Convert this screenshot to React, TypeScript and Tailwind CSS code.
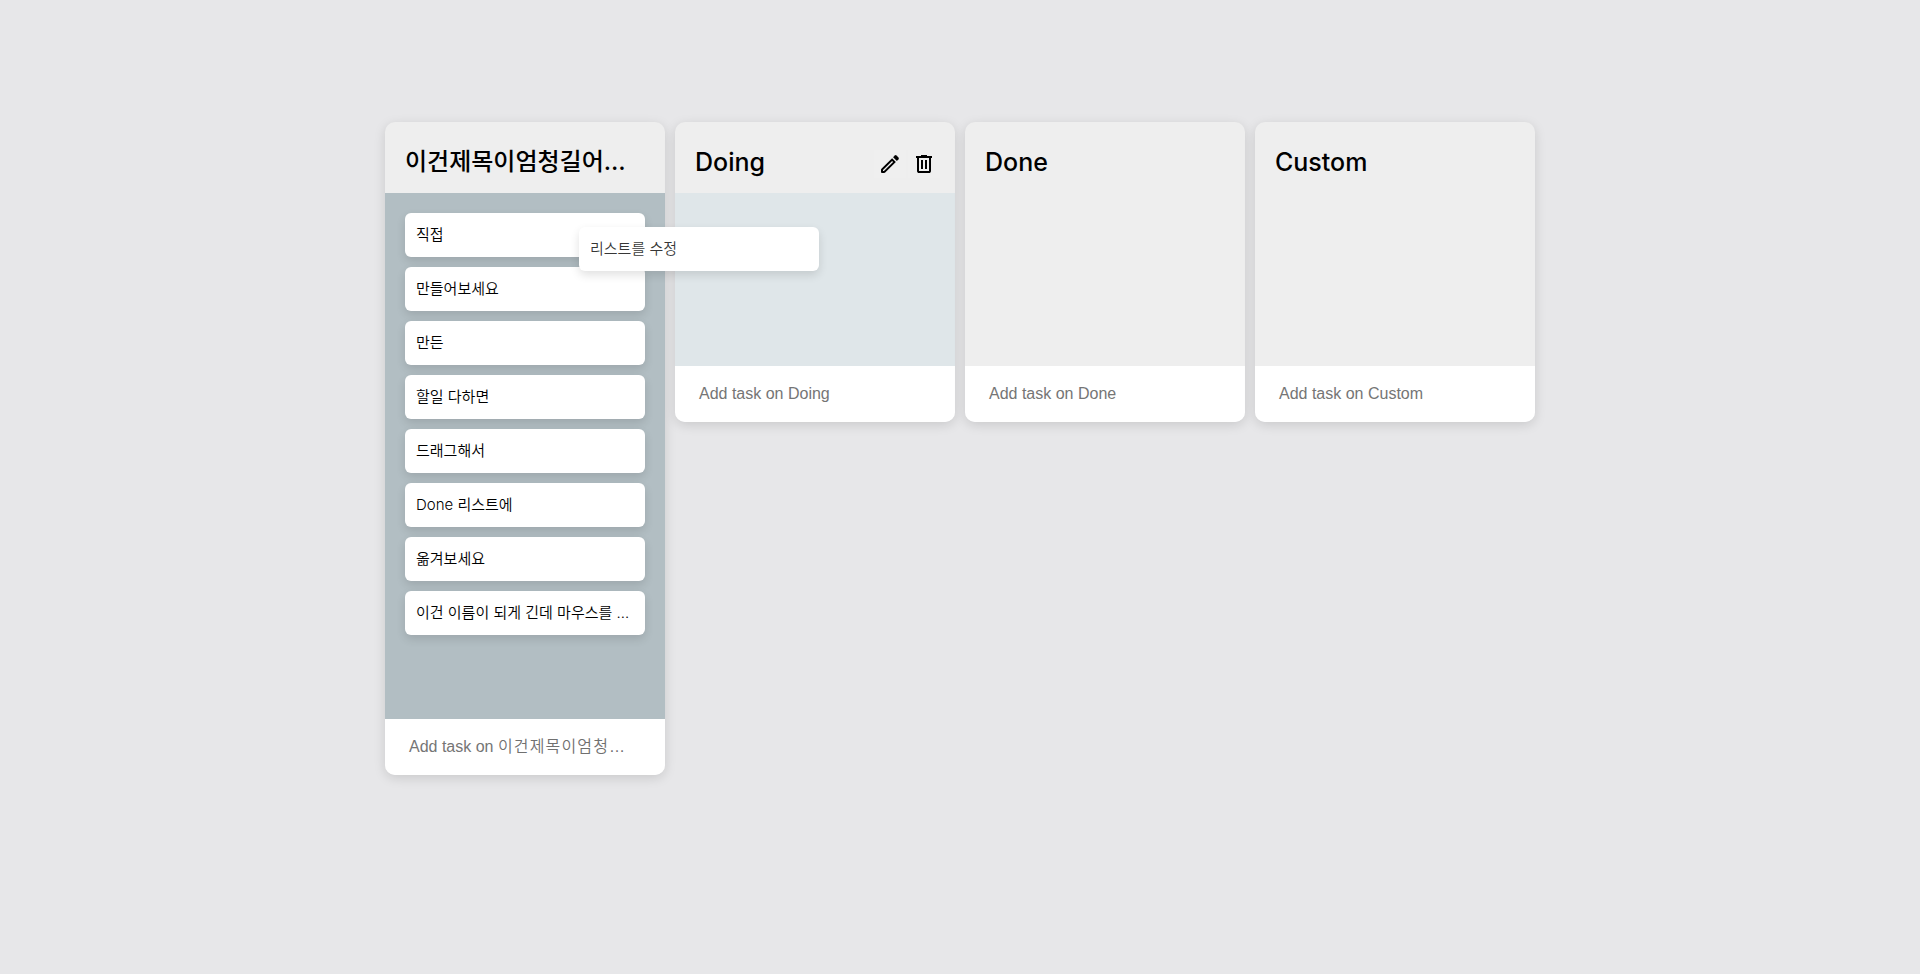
type Column = {
  title: string;
  tasks: string[];
  tone: string;
  titleClass: string;
  hint: string;
  hovered?: boolean;
  source?: boolean;
};

const latinTitle = 'text-[25px]';

const columns: Column[] = [
  {
    title: '이건제목이엄청길어…',
    titleClass: 'text-2xl',
    hint: '이건제목이엄청…',
    tone: 'bg-[#b2bec3]',
    source: true,
    tasks: [
      '직접',
      '만들어보세요',
      '만든',
      '할일 다하면',
      '드래그해서',
      'Done 리스트에',
      '옮겨보세요',
      '이건 이름이 되게 긴데 마우스를 …',
    ],
  },
  { title: 'Doing', titleClass: latinTitle, hint: 'Doing', tone: 'bg-[#dfe6e9]', hovered: true, tasks: [] },
  { title: 'Done', titleClass: latinTitle, hint: 'Done', tone: 'bg-[#eeeeee]', tasks: [] },
  { title: 'Custom', titleClass: latinTitle, hint: 'Custom', tone: 'bg-[#eeeeee]', tasks: [] },
];

const EditIcon = () => (
  <svg viewBox="0 0 24 24" className="size-6" fill="currentColor">
    <path
      fillRule="evenodd"
      d="M14.1 6.15L17.85 9.9L7.2 20.55Q6.75 21 6.2 21H4Q3 21 3 20V17.8Q3 17.25 3.45 16.8zM14.1 8.95L5 18.05V19h.95l9.1-9.1z"
    />
    <path d="M15.1 5.15L16.8 3.5Q17.65 2.7 18.5 3.5L20.5 5.5Q21.3 6.35 20.5 7.2L18.85 8.9z" />
  </svg>
);

const DeleteIcon = () => (
  <svg viewBox="0 0 24 24" className="size-6" fill="currentColor">
    <path
      fillRule="evenodd"
      d="M7 21q-.825 0-1.412-.587T5 19V6H4V4h5V3h6v1h5v2h-1v13q0 .825-.587 1.413T17 21zM17 6H7v13h10zM9 17h2V8H9zm4 0h2V8h-2z"
    />
  </svg>
);

const cardClass =
  'h-11 w-60 rounded-[6px] bg-white px-[11px] text-[15px] leading-[44px] font-[350] whitespace-nowrap';

function Board({ column }: { column: Column }) {
  return (
    <section className="flex min-h-[300px] w-[280px] flex-col overflow-hidden rounded-[10px] bg-[#eeeeee] shadow-[0_3px_12px_rgba(0,0,0,0.13)]">
      <header className="flex h-[71px] shrink-0 items-center justify-between pr-[15px] pl-5">
        <h2 className={`pt-[9px] leading-8 font-medium whitespace-nowrap ${column.titleClass}`}>{column.title}</h2>
        {column.hovered && (
          <div className="flex shrink-0 gap-[2px] pt-[13px]">
            <button className="flex h-7 w-8 items-center justify-center bg-[#efefef]">
              <EditIcon />
            </button>
            <button className="flex h-7 w-8 items-center justify-center bg-[#efefef]">
              <DeleteIcon />
            </button>
          </div>
        )}
      </header>
      <ul className={`flex grow flex-col gap-[10px] p-5 ${column.tone} ${column.source ? 'pb-[84px]' : ''}`}>
        {column.tasks.map((task) => (
          <li key={task} className={`${cardClass} shadow-[0_4px_10px_rgba(0,0,0,0.12)]`}>
            {task}
          </li>
        ))}
      </ul>
      <div
        role="textbox"
        className="flex h-14 shrink-0 items-center bg-white pl-6 font-['Liberation_Sans','Noto_Sans_CJK_KR',sans-serif] text-base whitespace-pre text-[#757575]"
      >
        <span>Add task on </span>
        <span className={column.source ? 'font-[350] tracking-[1.15px] text-[#707070]' : ''}>{column.hint}</span>
      </div>
    </section>
  );
}

export default function App() {
  return (
    <main className="relative flex h-[974px] items-start justify-center gap-[10px] overflow-hidden bg-[#e7e7e9] pt-[122px] font-['Inter','Noto_Sans_CJK_KR',sans-serif] text-black">
      {columns.map((column) => (
        <Board key={column.title} column={column} />
      ))}
      <div
        className={`${cardClass} absolute top-[227px] left-[579px] text-black/80 shadow-[0_4px_10px_rgba(0,0,0,0.12)]`}
      >
        리스트를 수정
      </div>
    </main>
  );
}
